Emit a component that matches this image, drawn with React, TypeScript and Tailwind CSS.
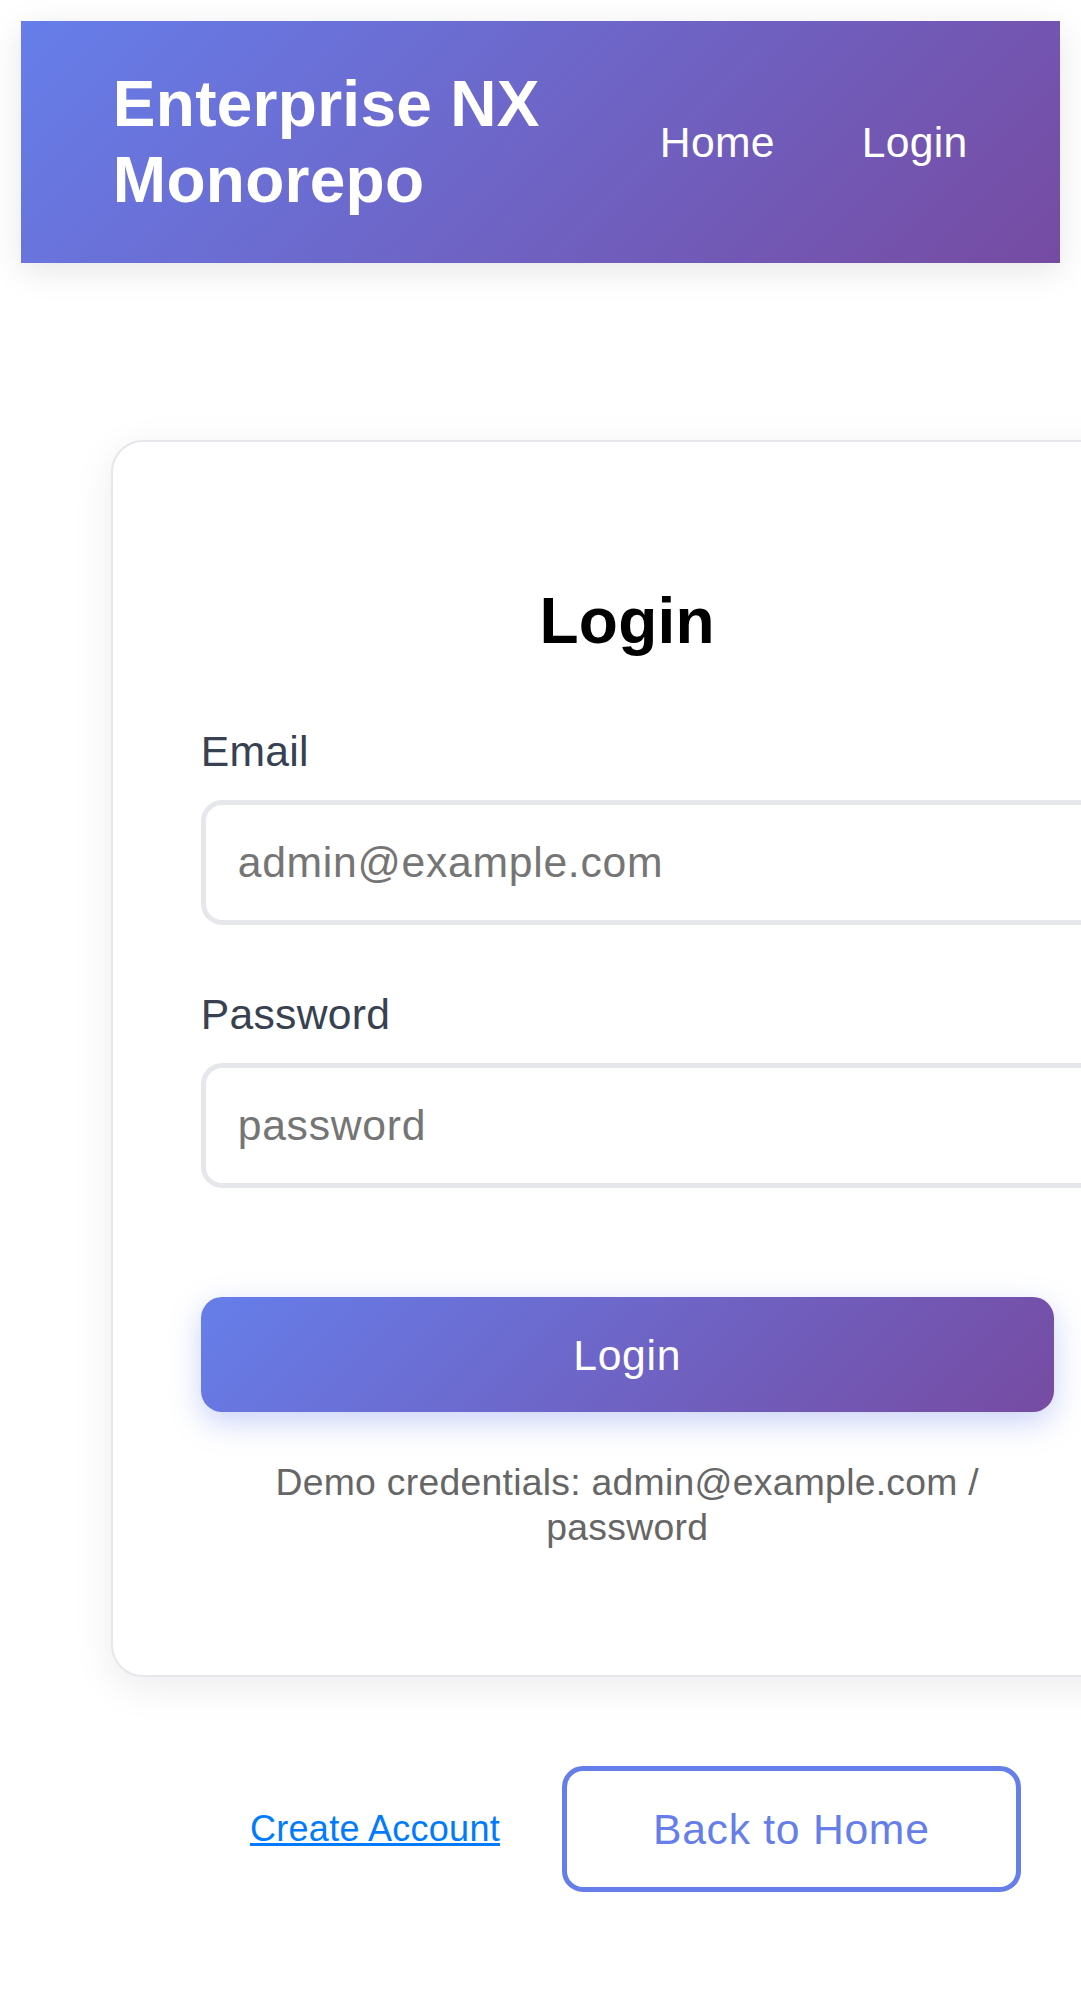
const FONT = "font-['Liberation_Sans',Arial,Helvetica,sans-serif]"

function Field({ label, type, placeholder, first }: { label: string; type: string; placeholder: string; first?: boolean }) {
  return (
    <div className={first ? 'mt-[67px]' : 'mt-[65px]'}>
      <label className="block text-[42.67px] leading-[49px] text-[#374151]">{label}</label>
      <input
        type={type}
        placeholder={placeholder}
        className="mt-[24px] box-border block h-[125px] w-[924px] rounded-[21px] border-[5.33px] border-[#e5e7eb] bg-white px-[32px] text-[42.67px] tracking-[0.017em] text-[#333] outline-none placeholder:text-[#757575]"
      />
    </div>
  )
}

export default function App() {
  return (
    <div className={`${FONT} min-h-screen overflow-x-hidden bg-white p-[21.33px] tracking-[0.017em]`}>
      <header className="flex h-[242px] items-center bg-[linear-gradient(135deg,#667eea_0%,#764ba2_100%)] pl-[91.5px] text-white shadow-[0_8px_32px_rgba(0,0,0,0.1)]">
        <h1 className="w-[547px] shrink-0 text-[64px] font-bold leading-[76.8px]">Enterprise NX Monorepo</h1>
        <nav className="flex gap-[87px] text-[42.67px] leading-[49px]">
          <a href="#">Home</a>
          <a href="#">Login</a>
        </nav>
      </header>

      <main className="mt-[177px] flex">
        <div className="ml-[89.4px] box-border w-[1033px] shrink-0 rounded-[32px] border-[2.67px] border-[#e5e7eb] bg-white px-[88px] pb-[125px] pt-[141px] shadow-[0_10px_40px_rgba(0,0,0,0.08)]">
          <h2 className="text-center text-[64px] font-bold leading-[76.8px] text-black">Login</h2>
          <form onSubmit={(e) => e.preventDefault()}>
            <Field first label="Email" type="email" placeholder="admin@example.com" />
            <Field label="Password" type="password" placeholder="password" />
            <button
              type="submit"
              className="mt-[109px] block h-[115px] w-full rounded-[21px] bg-[linear-gradient(135deg,#667eea_0%,#764ba2_100%)] text-[42.67px] tracking-[0.017em] text-white shadow-[0_10px_30px_rgba(102,126,234,0.35)]"
            >
              Login
            </button>
          </form>
          <p className="mt-[48px] text-center text-[37.33px] leading-[44.8px] text-[#666]">
            Demo credentials: admin@example.com / password
          </p>
        </div>
      </main>

      <div className="mt-[89px] flex items-center gap-[62px] pl-[228.7px]">
        <a href="#" className="text-[36px] leading-[42px] text-[#007bff] underline">
          Create Account
        </a>
        <button className="box-border h-[126px] rounded-[21px] border-[5.33px] border-[#667eea] bg-white px-[86px] text-[42.67px] tracking-[0.017em] text-[#667eea]">
          Back to Home
        </button>
      </div>
    </div>
  )
}
